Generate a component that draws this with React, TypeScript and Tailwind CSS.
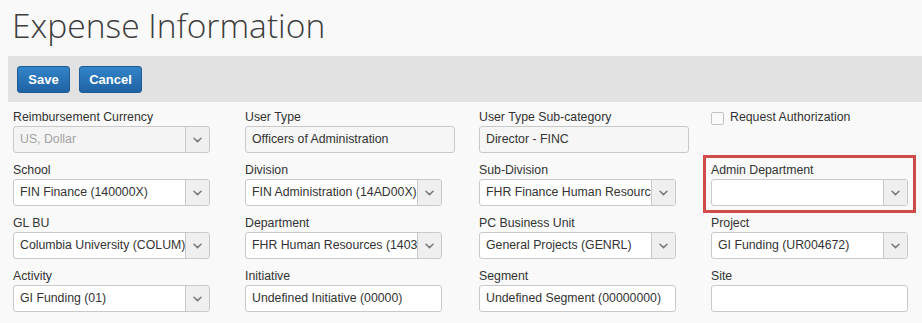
import React from "react";

type Field = {
  label: string;
  value?: string;
  kind: "select" | "text" | "readonly" | "disabled" | "checkbox";
  wide?: boolean;
  highlight?: boolean;
};

const rows: Field[][] = [
  [
    { label: "Reimbursement Currency", value: "US, Dollar", kind: "disabled" },
    { label: "User Type", value: "Officers of Administration", kind: "readonly", wide: true },
    { label: "User Type Sub-category", value: "Director - FINC", kind: "readonly", wide: true },
    { label: "Request Authorization", kind: "checkbox" },
  ],
  [
    { label: "School", value: "FIN Finance (140000X)", kind: "select" },
    { label: "Division", value: "FIN Administration (14AD00X)", kind: "select" },
    { label: "Sub-Division", value: "FHR Finance Human Resources (14FHR0X)", kind: "select" },
    { label: "Admin Department", value: "", kind: "select", highlight: true },
  ],
  [
    { label: "GL BU", value: "Columbia University (COLUM)", kind: "select" },
    { label: "Department", value: "FHR Human Resources (1403000)", kind: "select" },
    { label: "PC Business Unit", value: "General Projects (GENRL)", kind: "select" },
    { label: "Project", value: "GI Funding (UR004672)", kind: "select" },
  ],
  [
    { label: "Activity", value: "GI Funding (01)", kind: "select" },
    { label: "Initiative", value: "Undefined Initiative (00000)", kind: "text" },
    { label: "Segment", value: "Undefined Segment (00000000)", kind: "text" },
    { label: "Site", value: "", kind: "text" },
  ],
];

function Chevron() {
  return (
    <svg width="9" height="6" viewBox="0 0 9 6" fill="none">
      <path d="M1 1.2l3.5 3.4L8 1.2" stroke="#7a7a7a" strokeWidth="1.5" strokeLinecap="round" strokeLinejoin="round" />
    </svg>
  );
}

function Control({ field }: { field: Field }) {
  if (field.kind === "select" || field.kind === "disabled") {
    const disabled = field.kind === "disabled";
    return (
      <div
        className={`flex h-[27px] w-[197px] rounded-[3px] border border-[#c9c9c9] ${
          disabled ? "bg-[#f4f4f4]" : "bg-white"
        }`}
      >
        <div
          className={`flex-1 overflow-hidden whitespace-nowrap pl-[6px] leading-[25px] ${
            disabled ? "text-[#a3a3a3]" : "text-[#333]"
          }`}
        >
          {field.value}
        </div>
        <div className="flex w-[24px] items-center justify-center rounded-r-[3px] border-l border-[#c9c9c9] bg-[#efefef]">
          <Chevron />
        </div>
      </div>
    );
  }
  return (
    <div
      className={`h-[27px] overflow-hidden whitespace-nowrap rounded-[3px] border border-[#c9c9c9] pl-[6px] leading-[25px] text-[#333] ${
        field.wide ? "w-[210px]" : "w-[197px]"
      } ${field.kind === "readonly" ? "bg-[#f6f6f6]" : "bg-white"}`}
    >
      {field.value}
    </div>
  );
}

function Cell({ field }: { field: Field }) {
  if (field.kind === "checkbox") {
    return (
      <div className="flex h-[16px] items-center gap-[6px] text-[#333]">
        <span className="mt-[2px] h-[13px] w-[13px] rounded-[2px] border border-[#c4c4c4] bg-[#fafafa]" />
        <span className="leading-[16px]">{field.label}</span>
      </div>
    );
  }
  return (
    <div className="relative">
      {field.highlight && (
        <div className="pointer-events-none absolute -left-[8px] -top-[7px] h-[58px] w-[213px] border-[3px] border-[#cf4b4b]" />
      )}
      <div className="mb-[1px] leading-[16px] text-[#333]">{field.label}</div>
      <Control field={field} />
    </div>
  );
}

export default function App() {
  return (
    <div
      className="min-h-screen bg-[#f9f9f9] text-[12.3px]"
      style={{ fontFamily: '"Liberation Sans", Arial, sans-serif' }}
    >
      {/* Title */}
      <div className="h-[56px] pl-[12px]">
        <h1
          className="text-[33.6px] font-light leading-normal text-[#3d3d3d]"
          style={{ fontFamily: '"Open Sans", sans-serif' }}
        >
          Expense Information
        </h1>
      </div>

      {/* Toolbar */}
      <div className="ml-[8px] flex h-[46px] gap-[9px] bg-[#e2e2e2] pl-[9px] pt-[10px]">
        <button className="h-[27px] w-[53px] rounded-[3px] border border-[#1d5c95] bg-gradient-to-b from-[#3285c9] to-[#1f62a3] text-[13px] font-bold text-white">
          Save
        </button>
        <button className="h-[27px] w-[63px] rounded-[3px] border border-[#1d5c95] bg-gradient-to-b from-[#3285c9] to-[#1f62a3] text-[13px] font-bold text-white">
          Cancel
        </button>
      </div>

      {/* Form */}
      <div className="grid grid-cols-[232px_234px_232px_211px] gap-y-[9px] pl-[13px] pt-[7px]">
        {rows.flat().map((field, i) => (
          <Cell key={i} field={field} />
        ))}
      </div>
    </div>
  );
}
